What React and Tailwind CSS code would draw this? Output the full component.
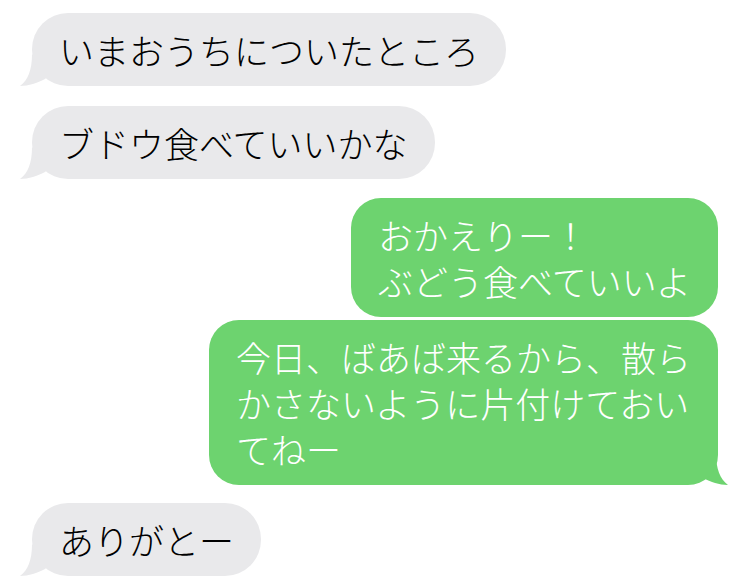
const font = { fontFamily: '"Noto Sans CJK JP", "Noto Sans", sans-serif' }

function Tail({ side, color }) {
  // small curl at the bottom corner of the bubble
  if (side === 'left') {
    return (
      <svg
        className="absolute bottom-0 left-[-12px]"
        width="30"
        height="32"
        viewBox="0 0 30 32"
      >
        <path d="M12 0 C12 16 8 26 0 32 C9 32 17 29 25 25 L30 20 L12 0 Z" fill={color} />
      </svg>
    )
  }
  return (
    <svg
      className="absolute bottom-0 right-[-10px] -scale-x-100"
      width="30"
      height="32"
      viewBox="0 0 30 32"
    >
      <path d="M12 0 C12 16 8 26 0 32 C9 32 17 29 25 25 L30 20 L12 0 Z" fill={color} />
    </svg>
  )
}

function Received({ lines, tail, className = '' }) {
  return (
    <div className={`relative self-start ${className}`}>
      <div className="relative z-10 rounded-[36px] bg-[#e9e9eb] px-[27px] py-[13.5px] text-[35px] font-light leading-[46px] text-black whitespace-nowrap">
        {lines.map((l, i) => (
          <div key={i}>{l}</div>
        ))}
      </div>
      {tail && <Tail side="left" color="#e9e9eb" />}
    </div>
  )
}

function Sent({ lines, tail, className = '' }) {
  return (
    <div className={`relative self-end ${className}`}>
      <div className="relative z-10 rounded-[30px] bg-[#6dd36f] px-[27px] py-[13.5px] text-[35px] font-light leading-[46px] text-white whitespace-nowrap">
        {lines.map((l, i) => (
          <div key={i}>{l}</div>
        ))}
      </div>
      {tail && <Tail side="right" color="#6dd36f" />}
    </div>
  )
}

export default function App() {
  return (
    <div className="w-[750px] h-[585px] overflow-hidden bg-white" style={font}>
      <div className="flex flex-col px-[32px] pt-[13px]">
        <Received lines={['いまおうちについたところ']} tail />
        <Received lines={['ブドウ食べていいかな']} tail className="mt-[20px]" />
        <Sent lines={['おかえりー！', 'ぶどう食べていいよ']} className="mt-[19px]" />
        <Sent
          lines={['今日、ばあば来るから、散ら', 'かさないように片付けておい', 'てねー']}
          tail
          className="mt-[3px]"
        />
        <Received lines={['ありがとー']} tail className="mt-[18px]" />
      </div>
    </div>
  )
}
